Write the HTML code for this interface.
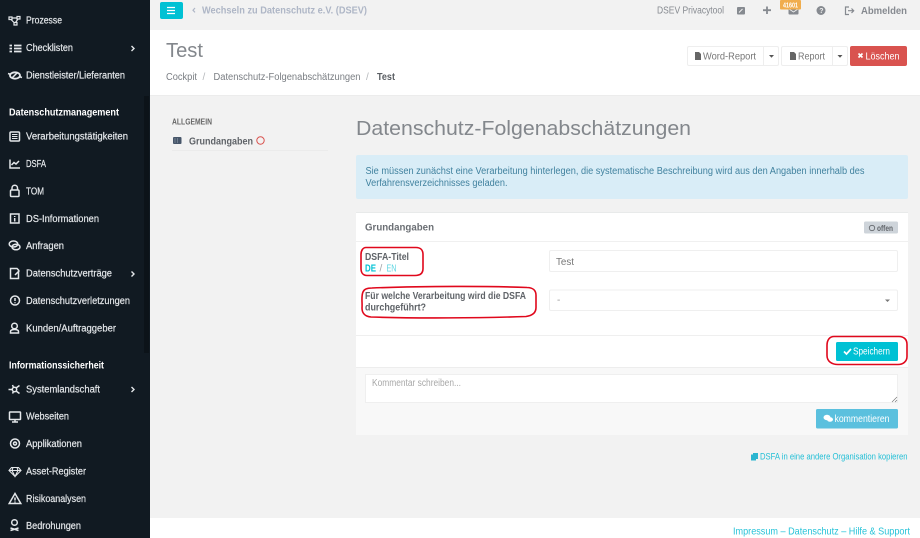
<!DOCTYPE html>
<html lang="de"><head><meta charset="utf-8"><title>DSFA</title>
<style>
html,body{margin:0;padding:0;width:920px;height:538px;overflow:hidden;background:#f2f2f2}
svg{display:block}
text{font-family:"Liberation Sans",sans-serif;font-size:10px}
.n text{fill:#e4e7ea;stroke:#e4e7ea;stroke-width:.2px}
.h text{fill:#fff;font-weight:bold}
.i{fill:none;stroke:#e4e7ea;stroke-width:1.5}
.t{stroke:currentColor;stroke-width:.15px}
</style></head><body>
<svg width="920" height="538" viewBox="0 0 920 538" xmlns="http://www.w3.org/2000/svg">
<rect width="920" height="538" fill="#f2f2f2"/>
<!-- sidebar -->
<rect width="150" height="538" fill="#111a22"/>
<rect x="144" y="96" width="5" height="257" fill="#0c1319"/>
<g class="n">
<text x="26" y="23.500" textLength="36" lengthAdjust="spacingAndGlyphs">Prozesse</text>
<text x="26" y="51" textLength="47" lengthAdjust="spacingAndGlyphs">Checklisten</text>
<text x="26" y="78.500" textLength="99" lengthAdjust="spacingAndGlyphs">Dienstleister/Lieferanten</text>
<text x="26" y="139.500" textLength="102" lengthAdjust="spacingAndGlyphs">Verarbeitungstätigkeiten</text>
<text x="26" y="167" textLength="20" lengthAdjust="spacingAndGlyphs">DSFA</text>
<text x="26" y="194.500" textLength="18" lengthAdjust="spacingAndGlyphs">TOM</text>
<text x="26" y="222" textLength="73" lengthAdjust="spacingAndGlyphs">DS-Informationen</text>
<text x="26" y="249" textLength="38" lengthAdjust="spacingAndGlyphs">Anfragen</text>
<text x="26" y="276.500" textLength="86" lengthAdjust="spacingAndGlyphs">Datenschutzverträge</text>
<text x="26" y="304" textLength="104" lengthAdjust="spacingAndGlyphs">Datenschutzverletzungen</text>
<text x="26" y="331.500" textLength="90" lengthAdjust="spacingAndGlyphs">Kunden/Auftraggeber</text>
<text x="26" y="392.500" textLength="74" lengthAdjust="spacingAndGlyphs">Systemlandschaft</text>
<text x="26" y="419.500" textLength="43" lengthAdjust="spacingAndGlyphs">Webseiten</text>
<text x="26" y="447" textLength="56" lengthAdjust="spacingAndGlyphs">Applikationen</text>
<text x="26" y="474.500" textLength="60" lengthAdjust="spacingAndGlyphs">Asset-Register</text>
<text x="26" y="502" textLength="60" lengthAdjust="spacingAndGlyphs">Risikoanalysen</text>
<text x="26" y="529" textLength="55" lengthAdjust="spacingAndGlyphs">Bedrohungen</text>
</g>
<g class="h">
<text x="9" y="115.500" textLength="110" lengthAdjust="spacingAndGlyphs">Datenschutzmanagement</text>
<text x="9" y="368.500" textLength="95" lengthAdjust="spacingAndGlyphs">Informationssicherheit</text>
</g>
<!-- sidebar chevrons -->
<g fill="none" stroke="#e4e7ea" stroke-width="1.400">
<path d="M131.500 46l2.500 2.500-2.500 2.500"/><path d="M131.500 271.500l2.500 2.500-2.500 2.500"/><path d="M131.500 387l2.500 2.500-2.500 2.500"/>
</g>
<!-- sidebar icons -->
<g class="i">
<path d="M9 17h3v2.500h-3zM17 16.500h3v2.500h-3zM14 22.500h3v2.500h-3zM12 18h5M11 19.500l3.500 3.500M18 19l-2.500 3.500" stroke-width="1.200"/>
<path d="M14 45.500h7.500M14 48.500h7.500M14 51.500h7.500" stroke-width="1.700"/><path d="M9.500 45.500h2.500M9.500 48.500h2.500M9.500 51.500h2.500" stroke-width="1.700"/>
<ellipse cx="15" cy="75.500" rx="5" ry="3.200" stroke-width="1.800"/><path d="M8 73.500l3 1M22 77.500l-3-1M12 78l5-5" stroke-width="1.500"/>
<rect x="10" y="132" width="9.500" height="9" rx="1"/><path d="M12 134.500h5.500M12 136.500h5.500M12 138.500h5.500" stroke-width="1"/>
<path d="M10 159.500v8.500h10M11.500 165l2.500-2.500 2 1.500 3-3"/>
<rect x="10.500" y="190" width="8.500" height="6.500" rx="1"/><path d="M12 190v-2a2.700 2.700 0 0 1 5.500 0v2"/>
<rect x="10.500" y="214" width="8.500" height="9"/><path d="M14.700 216v1M14.700 218v3.500"/>
<ellipse cx="13.500" cy="244" rx="4.300" ry="3"/><ellipse cx="16" cy="247" rx="4" ry="2.800"/>
<path d="M10.500 268.500h6.500l1.500 1.500v8.500h-8zM15 275l4.500-4.500"/>
<circle cx="15" cy="300.500" r="4.500"/><path d="M15 298v3M15 302.300v1"/>
<circle cx="14.500" cy="326" r="2.800"/><path d="M10.500 333v-1.500c0-1.500 2-2 4-2s4 .5 4 2v1.500z"/>
<circle cx="14.500" cy="389.500" r="2.200"/><path d="M8.500 389.500h4M16 388l3.500-2.500M16 391l3.500 2.500M13.500 387.500l-1-2.500M13.500 391.500l-1 2"/>
<rect x="9.500" y="412" width="11" height="7.500" rx=".5"/><path d="M15 419.500v2M12 422h6"/>
<circle cx="15" cy="443.500" r="4.500"/><circle cx="15" cy="443.500" r="1.500"/>
<path d="M11.500 467.500h7l2.500 3-6 6-6-6zM9 470.500h12M13 467.500l-1 3 3 6 3-6-1-3" stroke-width="1.100"/>
<path d="M15 493.500l5.800 10h-11.600zM15 497.500v3M15 501.500v1"/>
<circle cx="14.500" cy="522.500" r="2.800"/><path d="M10.500 530.500l8-2.500M18.500 530.500l-8-2.500"/>
</g>
<!-- topbar -->
<rect x="160" y="2" width="23" height="17" rx="2" fill="#00c1d4"/>
<path d="M167 7.500h8M167 10.500h8M167 13.500h8" stroke="#fff" stroke-width="1.300"/>
<path d="M195 8l-2 2.200 2 2.200" fill="none" stroke="#aeb6c6" stroke-width="1.200"/>
<text x="202" y="13.500" textLength="165" lengthAdjust="spacingAndGlyphs" font-weight="bold" fill="#aeb6c6" style="font-size:10.500px">Wechseln zu Datenschutz e.V. (DSEV)</text>
<text x="657" y="13.500" textLength="67" lengthAdjust="spacingAndGlyphs" fill="#868a90">DSEV Privacytool</text>
<rect x="737" y="7" width="8" height="7.500" rx="1" fill="#868a90"/><path d="M739 12.500l3.500-3.500" stroke="#f2f2f2" stroke-width="1"/>
<path d="M767 6.500v7.500M763 10.200h8" stroke="#868a90" stroke-width="1.800"/>
<rect x="788.500" y="7" width="10" height="7.500" rx="1" fill="#868a90"/><path d="M789 9l4.500 3 4.500-3" stroke="#f2f2f2" fill="none" stroke-width=".8"/>
<rect x="780" y="0" width="21" height="9.500" rx="1" fill="#f0ad4e"/>
<text x="783" y="7.300" textLength="15" lengthAdjust="spacingAndGlyphs" fill="#fff" font-weight="bold" style="font-size:7px">41601</text>
<circle cx="821" cy="10.500" r="4.500" fill="#868a90"/><text x="819.200" y="13" fill="#f2f2f2" font-weight="bold" style="font-size:7px">?</text>
<path d="M849 7h-3.500v7.500h3.500M848 10.700h5.500M851.500 8.500l2.200 2.200-2.200 2.200" fill="none" stroke="#868a90" stroke-width="1.200"/>
<text x="861" y="14" textLength="46" lengthAdjust="spacingAndGlyphs" fill="#868a90" font-weight="bold" style="font-size:10.500px">Abmelden</text>
<!-- title band -->
<rect x="150" y="30" width="770" height="65" fill="#fff"/>
<rect x="150" y="95" width="770" height="1" fill="#ececec"/>
<text x="166" y="57" textLength="37" lengthAdjust="spacingAndGlyphs" fill="#83878c" style="font-size:20px">Test</text>
<text x="166" y="80" textLength="31" lengthAdjust="spacingAndGlyphs" fill="#7a7e83">Cockpit</text>
<text x="202.500" y="80" fill="#b5b8bb">/</text>
<text x="213.500" y="80" textLength="147" lengthAdjust="spacingAndGlyphs" fill="#7a7e83">Datenschutz-Folgenabschätzungen</text>
<text x="366" y="80" fill="#b5b8bb">/</text>
<text x="377" y="80" textLength="18" lengthAdjust="spacingAndGlyphs" fill="#5a5e63" font-weight="bold">Test</text>
<!-- report buttons -->
<rect x="687.500" y="46.500" width="91" height="19" rx="1.500" fill="#fff" stroke="#eee"/>
<path d="M763.500 46.500v19" stroke="#eee"/>
<path d="M695 52h4l2 2v6h-6z" fill="#666"/>
<text x="703" y="59.500" textLength="53" lengthAdjust="spacingAndGlyphs" fill="#777">Word-Report</text>
<path d="M769 55h5l-2.500 2.700z" fill="#555"/>
<rect x="781.500" y="46.500" width="66" height="19" rx="1.500" fill="#fff" stroke="#eee"/>
<path d="M832.500 46.500v19" stroke="#eee"/>
<path d="M790 52h4l2 2v6h-6z" fill="#666"/>
<text x="798" y="59.500" textLength="27" lengthAdjust="spacingAndGlyphs" fill="#777">Report</text>
<path d="M837.500 55h5l-2.500 2.700z" fill="#555"/>
<rect x="850" y="46" width="57" height="20" rx="2" fill="#d9534f"/>
<path d="M858.500 53.500l4 4M862.500 53.500l-4 4" stroke="#fff" stroke-width="1.600"/>
<text x="865.500" y="59.500" textLength="34" lengthAdjust="spacingAndGlyphs" fill="#fff">Löschen</text>
<!-- left nav -->
<text x="172" y="124.500" textLength="40" lengthAdjust="spacingAndGlyphs" fill="#666" font-weight="bold" style="font-size:8.500px">ALLGEMEIN</text>
<rect x="173" y="137" width="8.500" height="7" rx="1" fill="#47566a"/>
<path d="M175 138v5M177.500 138v5" stroke="#8b98a8" stroke-width=".6"/>
<text x="189" y="144.500" textLength="64" lengthAdjust="spacingAndGlyphs" fill="#5f6368" font-weight="bold">Grundangaben</text>
<circle cx="260.500" cy="140.500" r="3.700" fill="none" stroke="#d9534f"/>
<rect x="172" y="150" width="156" height="1" fill="#ebebeb"/>
<!-- main -->
<text x="356" y="135" textLength="335" lengthAdjust="spacingAndGlyphs" fill="#83878c" style="font-size:20.500px">Datenschutz-Folgenabschätzungen</text>
<rect x="356" y="155" width="552" height="44" rx="2" fill="#d9edf7"/>
<text x="365.500" y="174" textLength="499" lengthAdjust="spacingAndGlyphs" fill="#41829f">Sie müssen zunächst eine Verarbeitung hinterlegen, die systematische Beschreibung wird aus den Angaben innerhalb des</text>
<text x="365.500" y="186" textLength="142" lengthAdjust="spacingAndGlyphs" fill="#41829f">Verfahrensverzeichnisses geladen.</text>
<!-- card -->
<rect x="356" y="212" width="552" height="223" fill="#fff"/>
<rect x="356" y="212" width="552" height="1" fill="#e8eaea"/>
<rect x="356" y="241" width="552" height="1" fill="#f0f0f0"/>
<text x="365" y="230.500" textLength="69" lengthAdjust="spacingAndGlyphs" fill="#6b6f74" font-weight="bold" style="font-size:10.500px">Grundangaben</text>
<rect x="864" y="221.500" width="34" height="12" rx="1.500" fill="#ced4da"/>
<circle cx="872" cy="228" r="2.700" fill="none" stroke="#5f6368" stroke-width=".8"/>
<text x="877" y="231" textLength="16" lengthAdjust="spacingAndGlyphs" fill="#5f6368" font-weight="bold" style="font-size:8px">offen</text>
<text x="365" y="260" textLength="44" lengthAdjust="spacingAndGlyphs" fill="#5f6368" font-weight="bold">DSFA-Titel</text>
<text x="365" y="271.500" textLength="11" lengthAdjust="spacingAndGlyphs" fill="#00c1d4" font-weight="bold">DE</text>
<text x="379.500" y="271.500" fill="#a0a4a8">/</text>
<text x="386.500" y="271.500" textLength="10" lengthAdjust="spacingAndGlyphs" fill="#5cd5e2">EN</text>
<text x="365" y="299" textLength="161" lengthAdjust="spacingAndGlyphs" fill="#5f6368" font-weight="bold">Für welche Verarbeitung wird die DSFA</text>
<text x="365" y="310.500" textLength="61" lengthAdjust="spacingAndGlyphs" fill="#5f6368" font-weight="bold">durchgeführt?</text>
<rect x="549.500" y="250.500" width="348" height="21" rx="1.500" fill="#fff" stroke="#efefef"/>
<text x="556" y="265" textLength="18" lengthAdjust="spacingAndGlyphs" fill="#777">Test</text>
<rect x="549.500" y="290" width="348" height="20.500" rx="1.500" fill="#fff" stroke="#efefef"/>
<text x="557" y="303" fill="#999">-</text>
<path d="M885 299.500h5l-2.500 2.500z" fill="#777"/>
<rect x="356" y="335" width="552" height="1" fill="#efefef"/>
<rect x="836" y="342" width="62" height="19" rx="1.500" fill="#00c1d4"/>
<path d="M844 351.500l2.500 2.500 4.500-5" fill="none" stroke="#fff" stroke-width="1.700"/>
<text x="853" y="354.500" textLength="37" lengthAdjust="spacingAndGlyphs" fill="#fff">Speichern</text>
<!-- comment -->
<rect x="356" y="367" width="552" height="68" fill="#f8f8f8"/>
<rect x="356" y="367" width="552" height="1" fill="#ededed"/>
<rect x="365.500" y="374.500" width="532" height="28" fill="#fff" stroke="#efefef"/>
<text x="372" y="386" textLength="89" lengthAdjust="spacingAndGlyphs" fill="#a8a8a8">Kommentar schreiben...</text>
<path d="M892 402l5-5M895 402l2-2" stroke="#777" stroke-width=".7"/>
<rect x="816" y="409" width="82" height="19.500" rx="1.500" fill="#5bc0de"/>
<ellipse cx="827" cy="417.500" rx="3.500" ry="2.700" fill="#fff"/><ellipse cx="830" cy="419.500" rx="3" ry="2.300" fill="#fff"/>
<text x="834.500" y="422" textLength="55" lengthAdjust="spacingAndGlyphs" fill="#fff">kommentieren</text>
<!-- copy link -->
<rect x="751" y="454.500" width="5" height="6" fill="#2bb5d0"/><rect x="753" y="453" width="5" height="6" fill="#2bb5d0"/>
<text x="760" y="459.500" textLength="147.500" lengthAdjust="spacingAndGlyphs" fill="#22bfd6" style="font-size:9.500px">DSFA in eine andere Organisation kopieren</text>
<!-- footer -->
<rect x="150" y="518" width="770" height="20" fill="#fff"/>
<text x="733" y="534.500" textLength="177" lengthAdjust="spacingAndGlyphs" fill="#27c3d8" style="font-size:10.500px">Impressum – Datenschutz – Hilfe &amp; Support</text>
<!-- red annotations -->
<g fill="none" stroke="#e0081c" stroke-width="1.600">
<path d="M366 247.500h50c5 0 7 3 7 7v14c0 4-2 7-8 7h-48c-4 0-6-3-6-7v-14c0-4 2-7 5-7z"/>
<path d="M372 288c50-2 120-2 155-.5 6 0 9 3 9 8v12c0 5-3 8-10 9-45 1.500-110 2-155 .5-6-.5-9-4-9-9 .5-5-1-12 1-16 1-3 5-4 9-4z"/>
<path d="M834 336.500h65c5 0 8 3 8 8v12c0 5-4 8-9 8h-60c-6 0-11-3-11-9v-10c0-6 3-9 7-9z"/>
</g>
</svg>
</body></html>
